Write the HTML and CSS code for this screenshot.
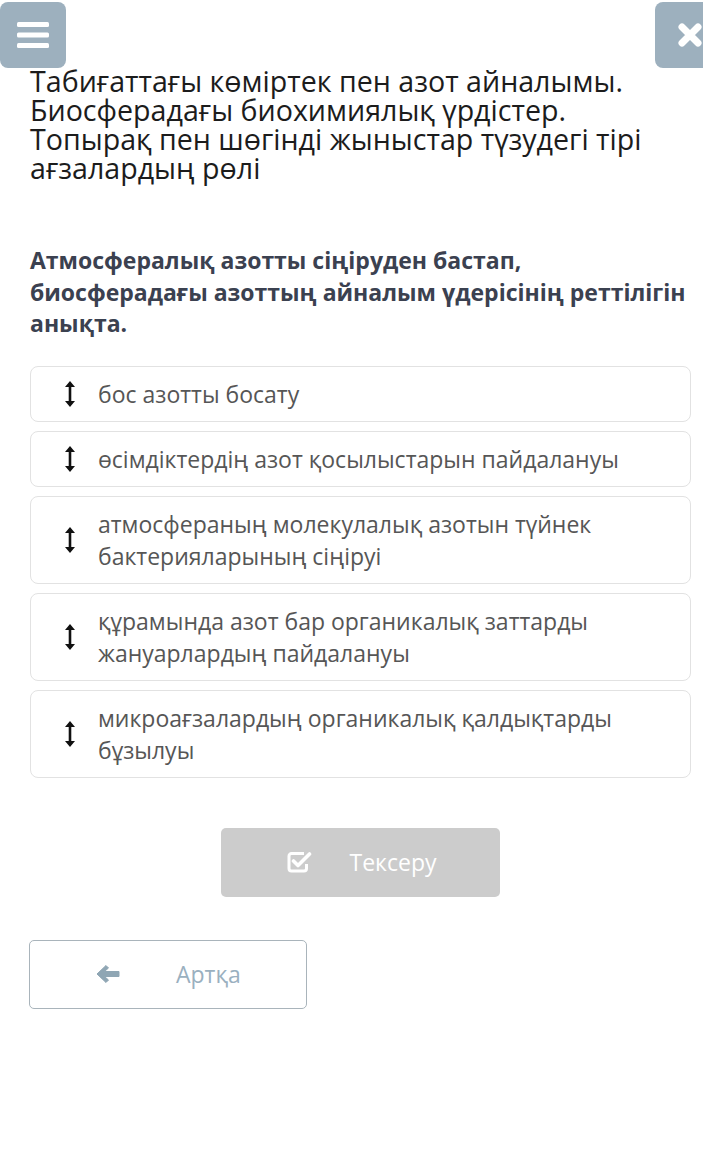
FILE: index.html
```html
<!DOCTYPE html>
<html lang="kk">
<head>
    <meta charset="UTF-8">
    <meta name="viewport" content="width=device-width, initial-scale=1.0">
    <title>Реттілік</title>
    <link rel="stylesheet" href="styles.css">
</head>
<body>
    <!-- Top bar -->
    <div class="topbar">
        <button class="icon-btn menu-btn" aria-label="Мәзір">
            <svg width="32" height="26" viewBox="0 0 32 26">
                <rect x="0" y="0" width="32" height="5" rx="1.5" fill="#fff"/>
                <rect x="0" y="10.5" width="32" height="5" rx="1.5" fill="#fff"/>
                <rect x="0" y="21" width="32" height="5" rx="1.5" fill="#fff"/>
            </svg>
        </button>
        <button class="icon-btn close-btn" aria-label="Жабу">
            <svg width="26" height="26" viewBox="0 0 26 26">
                <path d="M5 5 L21 21 M21 5 L5 21" stroke="#fff" stroke-width="7" stroke-linecap="round"/>
            </svg>
        </button>
    </div>

    <div class="container">
        <h1 class="title">Табиғаттағы көміртек пен азот айналымы. Биосферадағы биохимиялық үрдістер. Топырақ пен шөгінді жыныстар түзудегі тірі ағзалардың рөлі</h1>

        <p class="question">Атмосфералық азотты сіңіруден бастап, биосферадағы азоттың айналым үдерісінің реттілігін анықта.</p>

        <ul class="items">
            <li class="item">
                <span class="handle"><svg width="10" height="26" viewBox="0 0 10 26"><path d="M5 0 L10 6 L6.3 6 L6.3 20 L10 20 L5 26 L0 20 L3.7 20 L3.7 6 L0 6 Z" fill="#111"/></svg></span>
                <span class="text">бос азотты босату</span>
            </li>
            <li class="item">
                <span class="handle"><svg width="10" height="26" viewBox="0 0 10 26"><path d="M5 0 L10 6 L6.3 6 L6.3 20 L10 20 L5 26 L0 20 L3.7 20 L3.7 6 L0 6 Z" fill="#111"/></svg></span>
                <span class="text">өсімдіктердің азот қосылыстарын пайдалануы</span>
            </li>
            <li class="item">
                <span class="handle"><svg width="10" height="26" viewBox="0 0 10 26"><path d="M5 0 L10 6 L6.3 6 L6.3 20 L10 20 L5 26 L0 20 L3.7 20 L3.7 6 L0 6 Z" fill="#111"/></svg></span>
                <span class="text">атмосфераның молекулалық азотын түйнек бактерияларының сіңіруі</span>
            </li>
            <li class="item">
                <span class="handle"><svg width="10" height="26" viewBox="0 0 10 26"><path d="M5 0 L10 6 L6.3 6 L6.3 20 L10 20 L5 26 L0 20 L3.7 20 L3.7 6 L0 6 Z" fill="#111"/></svg></span>
                <span class="text">құрамында азот бар органикалық заттарды жануарлардың пайдалануы</span>
            </li>
            <li class="item">
                <span class="handle"><svg width="10" height="26" viewBox="0 0 10 26"><path d="M5 0 L10 6 L6.3 6 L6.3 20 L10 20 L5 26 L0 20 L3.7 20 L3.7 6 L0 6 Z" fill="#111"/></svg></span>
                <span class="text">микроағзалардың органикалық қалдықтарды бұзылуы</span>
            </li>
        </ul>

        <div class="check-row">
            <button class="check-btn">
                <svg width="25" height="22" viewBox="0 0 25 22">
                    <path d="M17 2.5 H4.5 A2.5 2.5 0 0 0 2 5 V17.5 A2.5 2.5 0 0 0 4.5 20 H17 A2.5 2.5 0 0 0 19.5 17.5 V13" fill="none" stroke="#fff" stroke-width="3"/>
                    <path d="M6.5 10 L11 14.5 L22.5 3" fill="none" stroke="#fff" stroke-width="3.6" stroke-linecap="round" stroke-linejoin="round"/>
                </svg>
                <span>Тексеру</span>
            </button>
        </div>

        <button class="back-btn">
            <svg width="24" height="20" viewBox="0 0 24 20">
                <path d="M1 10 L10 1.5 L12.5 4 L8.5 7.5 H23 V12.5 H8.5 L12.5 16 L10 18.5 Z" fill="#8fa6b4" stroke="#8fa6b4" stroke-width="1" stroke-linejoin="round"/>
            </svg>
            <span>Артқа</span>
        </button>
    </div>
</body>
</html>
```

FILE: styles.css
```css
/* General */
body {
    margin: 0;
    padding: 0;
    background-color: #fff;
    font-family: "Open Sans", "Liberation Sans", sans-serif;
    color: #222;
}

button {
    font-family: inherit;
    cursor: pointer;
}

/* Top bar */
.topbar {
    display: flex;
    justify-content: space-between;
    padding-top: 2px;
    height: 66px;
    position: relative;
    z-index: 1;
}

.icon-btn {
    width: 66px;
    height: 66px;
    border: none;
    border-radius: 8px;
    background-color: #9db0be;
    display: flex;
    align-items: center;
    padding: 0;
}

.menu-btn {
    justify-content: center;
}

.close-btn {
    margin-right: -18px;
    padding-left: 22px;
}

/* Content */
.container {
    padding: 0 12px 0 30px;
}

.title {
    margin: -2px 0 0;
    font-size: 28.6px;
    font-weight: 400;
    line-height: 29px;
    color: #1c1c1c;
}

.question {
    margin: 63px -10px 0 0;
    font-size: 23px;
    font-weight: 700;
    line-height: 31.5px;
    color: #3b4150;
}

/* Sortable items */
.items {
    list-style: none;
    margin: 26px 0 0;
    padding: 0;
    display: flex;
    flex-direction: column;
    gap: 9px;
}

.item {
    display: flex;
    align-items: center;
    border: 1px solid #e2e2e2;
    border-radius: 8px;
    padding: 11px 20px 11px 0;
    font-size: 23px;
    line-height: 32px;
    color: #565656;
}

.handle {
    width: 67px;
    flex-shrink: 0;
    display: flex;
    justify-content: center;
    padding-left: 11px;
    box-sizing: border-box;
}

.handle svg {
    display: block;
}

/* Buttons */
.check-row {
    display: flex;
    justify-content: center;
    margin-top: 50px;
}

.check-btn {
    width: 279px;
    height: 69px;
    border: none;
    border-radius: 5px;
    background-color: #cccccc;
    color: #fff;
    font-size: 23px;
    display: flex;
    align-items: center;
    justify-content: center;
    gap: 38px;
    padding: 0 0 0 2px;
}

.back-btn {
    margin-top: 43px;
    width: 278px;
    height: 69px;
    border: 1px solid #a9b4bb;
    border-radius: 5px;
    background-color: #fff;
    color: #9ab0bf;
    font-size: 23px;
    display: flex;
    align-items: center;
    gap: 56px;
    padding: 0 0 0 66px;
    margin-left: -1px;
}
```
